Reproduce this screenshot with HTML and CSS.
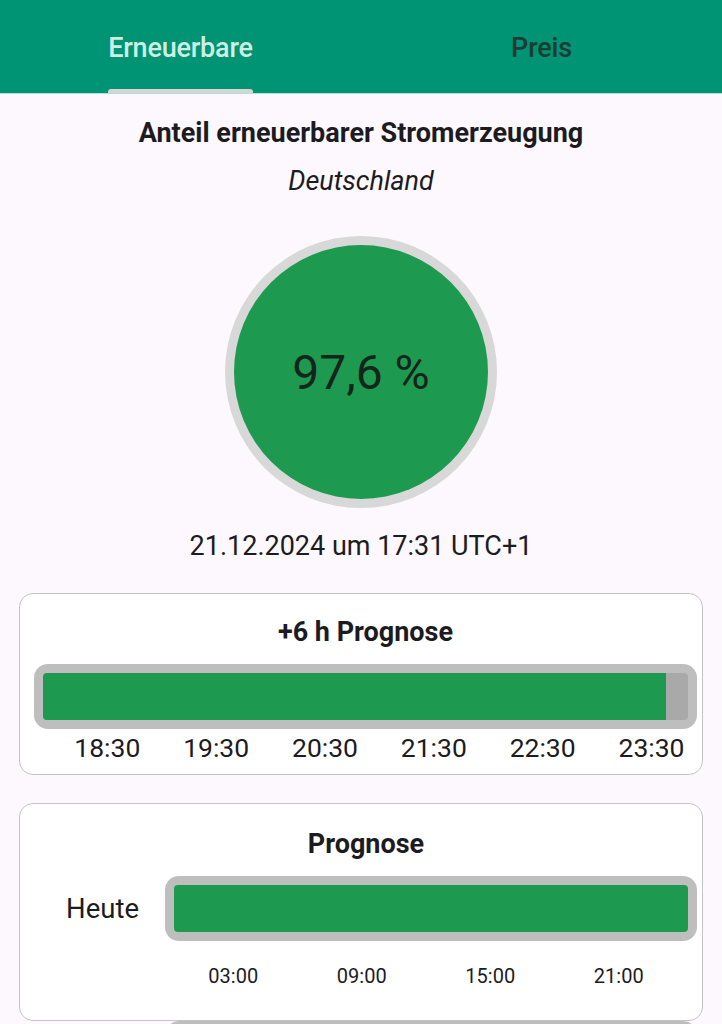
FILE: index.html
```html
<!DOCTYPE html>
<html lang="de">
<head>
<meta charset="utf-8">
<title>Erneuerbare</title>
<link rel="stylesheet" href="styles.css">
</head>
<body>
<header class="tabs">
  <div class="tab active"><span class="tab-label">Erneuerbare</span><span class="indicator"></span></div>
  <div class="tab"><span class="tab-label">Preis</span></div>
</header>
<main class="content">
  <h1 class="title">Anteil erneuerbarer Stromerzeugung</h1>
  <p class="region">Deutschland</p>
  <div class="gauge"><div class="gauge-inner">97,6 %</div></div>
  <p class="stamp">21.12.2024 um 17:31 UTC+1</p>

  <section class="card card-short">
    <h2 class="card-title">+6 h Prognose</h2>
    <div class="bar bar-wide">
      <div class="track"><div class="fill" style="width:96.6%"></div></div>
    </div>
    <div class="hours">
      <span>18:30</span><span>19:30</span><span>20:30</span><span>21:30</span><span>22:30</span><span>23:30</span>
    </div>
  </section>

  <section class="card card-day">
    <h2 class="card-title">Prognose</h2>
    <div class="day-row">
      <span class="day-label">Heute</span>
      <div class="bar">
        <div class="track"><div class="fill" style="width:100%"></div></div>
      </div>
    </div>
    <div class="day-hours">
      <span>03:00</span><span>09:00</span><span>15:00</span><span>21:00</span>
    </div>
    <div class="day-row next-row">
      <span class="day-label"></span>
      <div class="bar">
        <div class="track"><div class="fill" style="width:100%"></div></div>
      </div>
    </div>
  </section>
</main>
</body>
</html>
```
FILE: styles.css
```css
* { box-sizing: border-box; }
html, body { margin: 0; padding: 0; }
body {
  background: #fdf8fd;
  font-family: Roboto, "Noto Sans", sans-serif;
  color: #1c1b1f;
  width: 722px;
  height: 1024px;
  overflow: hidden;
}
.tabs {
  display: flex;
  height: 94px;
  background: #009474;
  border-bottom: 1px solid #b3e0d6;
}
.tab {
  flex: 1;
  display: flex;
  flex-direction: column;
  align-items: center;
  justify-content: flex-end;
  position: relative;
}
.tab-label {
  font-size: 27px;
  font-weight: 500;
  letter-spacing: -0.2px;
  line-height: 30px;
  color: #1c3d34;
  margin-bottom: 30px;
}
.tab.active .tab-label { color: #cfeee3; }
.indicator {
  position: absolute;
  bottom: 0;
  left: 108px;
  width: 145px;
  height: 4px;
  background: #d5d5d5;
  border-radius: 3px 3px 0 0;
}
.content {
  padding: 0 19px;
  display: flex;
  flex-direction: column;
  align-items: center;
}
.title {
  margin: 23px 0 0;
  font-size: 27px;
  font-weight: 700;
  letter-spacing: 0;
  line-height: 32px;
  text-align: center;
}
.region {
  margin: 16px 0 0;
  font-size: 27px;
  font-style: italic;
  line-height: 32px;
}
.gauge {
  margin-top: 39px;
  width: 272px;
  height: 272px;
  border-radius: 50%;
  background: #d8d8d8;
  padding: 9px;
}
.gauge-inner {
  width: 100%;
  height: 100%;
  border-radius: 50%;
  background: #1e9a50;
  display: flex;
  align-items: center;
  justify-content: center;
  font-size: 48px;
  color: #14261b;
}
.stamp {
  margin: 22px 0 0;
  font-size: 27px;
  line-height: 32px;
}
.card {
  align-self: stretch;
  background: #fff;
  border: 1.5px solid #c4c4c4;
  border-radius: 14px;
}
.card-short {
  margin-top: 31px;
  height: 182px;
  padding: 22px 5px 0 14px;
}
.card-title {
  margin: 0;
  font-size: 27px;
  font-weight: 700;
  line-height: 32px;
  text-align: center;
}
.card-day .card-title { margin-left: 15px; }
.bar {
  margin-top: 16px;
  height: 65px;
  background: #bebebe;
  border-radius: 14px;
  padding: 9px;
}
.track {
  height: 100%;
  background: #a9a9a9;
  border-radius: 4px;
  overflow: hidden;
}
.fill {
  height: 100%;
  background: #1e9a50;
}
.hours {
  display: grid;
  grid-template-columns: repeat(6, 1fr);
  margin: 5px 12.5px 0 -2.5px;
  font-size: 26.5px;
  line-height: 28px;
}
.hours span { text-align: right; }
.card-day {
  margin-top: 28px;
  height: 218px;
  padding: 24px 5px 0 0;
}
.day-row {
  display: grid;
  grid-template-columns: 145px 1fr;
  align-items: center;
  margin-top: 16px;
}
.day-row .bar { margin-top: 0; }
.day-label {
  text-align: right;
  padding-right: 26px;
  font-size: 27.5px;
}
.day-hours {
  display: grid;
  grid-template-columns: repeat(4, 1fr);
  margin: 21px 14px 0 149px;
  font-size: 20px;
  line-height: 28px;
}
.day-hours span { text-align: center; }
.next-row { margin-top: 31px; }
```
